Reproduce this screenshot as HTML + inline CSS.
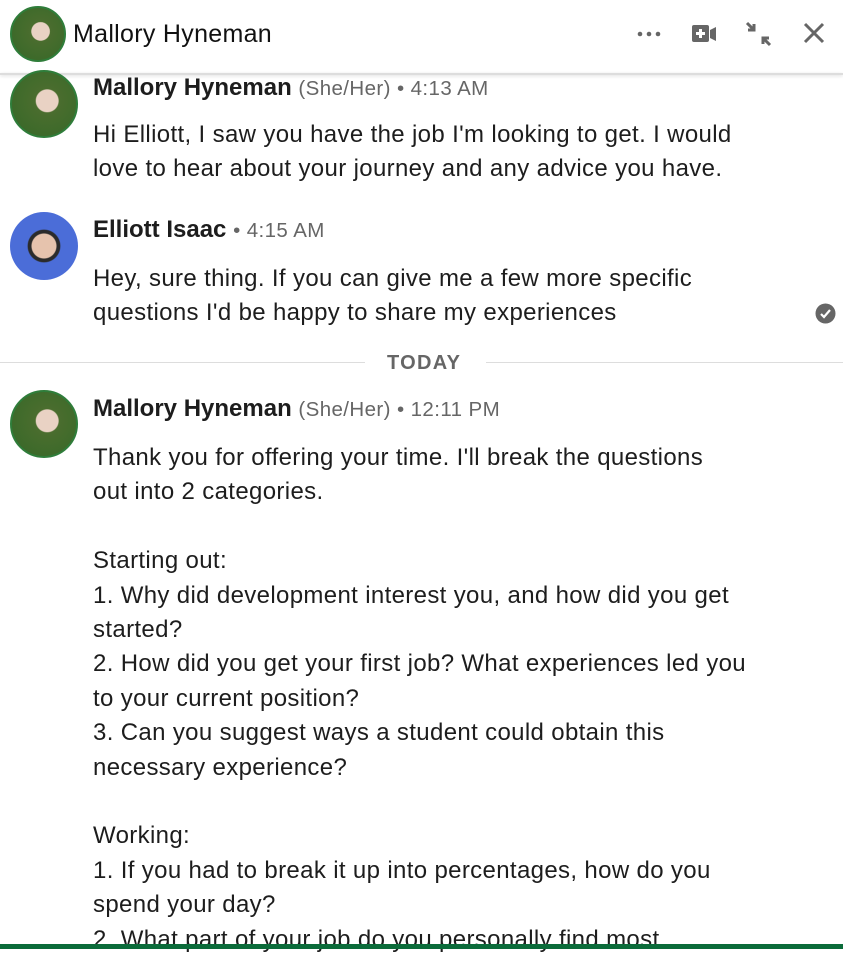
<!DOCTYPE html>
<html><head><meta charset="utf-8"><style>
html,body{margin:0;padding:0;width:843px;height:949px;overflow:hidden;background:#fff;font-family:"Liberation Sans",sans-serif;color:#1d1d1d}
.a{position:absolute;white-space:nowrap}
.t{font-size:24px;letter-spacing:0.35px;line-height:34.4px;left:93px}
.n{font-size:24px;font-weight:bold;letter-spacing:0;left:93px}
.n span{font-weight:normal;color:#666;font-size:20.5px;letter-spacing:0.4px}
.av{position:absolute;border-radius:50%;overflow:hidden}
.g{background:radial-gradient(circle at 55% 45%,#e9d2c4 0 22%,#4a6d2e 24%,#3d6a2a 70%,#2f5a20 100%);border:2px solid #2f7d3a;box-sizing:border-box}
</style></head><body>
<div class="av g" style="left:10px;top:6px;width:56px;height:56px"></div>
<div class="a" style="left:73px;top:20px;font-size:25px;font-weight:500;letter-spacing:0.3px;color:#111">Mallory Hyneman</div>
<svg class="a" style="left:630px;top:18px" width="200" height="32" viewBox="0 0 200 32">
<g fill="#666"><circle cx="10" cy="16" r="2.3"/><circle cx="19" cy="16" r="2.3"/><circle cx="28" cy="16" r="2.3"/>
<rect x="62" y="7" width="17" height="17" rx="2"/><path d="M80 12l6-3v14l-6-3z"/></g>
<path d="M70.5 11v9M66 15.5h9" stroke="#fff" stroke-width="3"/>
<g stroke="#666" stroke-width="3" fill="none"><path d="M117 5l7 7M124 6v6h-6M140 27l-7-7M133 26v-6h6"/><path d="M175 6l18 18M193 6l-18 18"/></g>
</svg>
<div class="a" style="left:0;top:73px;width:843px;height:2px;background:#ddd;box-shadow:0 1px 3px rgba(0,0,0,.15)"></div>
<div class="av g" style="left:10px;top:70px;width:68px;height:68px"></div>
<div class="a n" style="top:74px">Mallory Hyneman <span>(She/Her) • 4:13 AM</span></div>
<div class="a t" style="top:118px">Hi Elliott, I saw you have the job I'm looking to get. I would<br>love to hear about your journey and any advice you have.</div>
<div class="av" style="left:10px;top:212px;width:68px;height:68px;background:radial-gradient(circle at 50% 50%,#e6c3ad 0 25%,#2b2b2b 27% 33%,#4b6dd8 35%)"></div>
<div class="a n" style="top:216px">Elliott Isaac <span>• 4:15 AM</span></div>
<div class="a t" style="top:262px">Hey, sure thing. If you can give me a few more specific<br>questions I'd be happy to share my experiences</div>
<svg class="a" style="left:815px;top:303px" width="21" height="21"><circle cx="10.5" cy="10.5" r="10" fill="#666"/><path d="M6 11l3 3 6-7" stroke="#fff" stroke-width="2.2" fill="none"/></svg>
<div class="a" style="left:0;top:362px;width:365px;height:1px;background:#ddd"></div>
<div class="a" style="left:486px;top:362px;width:357px;height:1px;background:#ddd"></div>
<div class="a" style="left:387px;top:352px;font-size:20px;font-weight:bold;color:#666;letter-spacing:1.3px">TODAY</div>
<div class="av g" style="left:10px;top:390px;width:68px;height:68px"></div>
<div class="a n" style="top:395px">Mallory Hyneman <span>(She/Her) • 12:11 PM</span></div>
<div class="a t" style="top:441px">Thank you for offering your time. I'll break the questions<br>out into 2 categories.<br><br>Starting out:<br>1. Why did development interest you, and how did you get<br>started?<br>2. How did you get your first job? What experiences led you<br>to your current position?<br>3. Can you suggest ways a student could obtain this<br>necessary experience?<br><br>Working:<br>1. If you had to break it up into percentages, how do you<br>spend your day?<br>2. What part of your job do you personally find most</div>
<div class="a" style="left:0;top:944px;width:843px;height:5px;background:#0b6b3a"></div>
</body></html>
